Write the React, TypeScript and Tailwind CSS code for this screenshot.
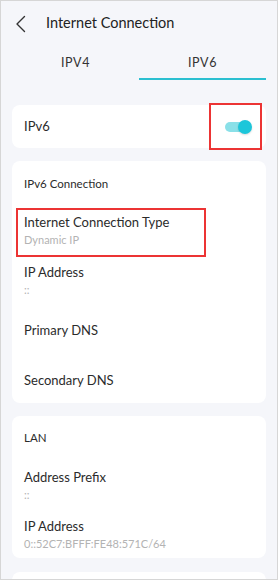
import React from "react";

const font = { fontFamily: 'Lato, "Open Sans", Arial, sans-serif' };

function Row({ label, value, className }: { label: string; value?: string; className?: string }) {
  return (
    <div className={className}>
      <div className="text-[13px] leading-[18px] text-[#2b2b2b]">{label}</div>
      {value !== undefined && (
        <div className="text-[11px] leading-[18px] text-[#b3b3b3]">{value}</div>
      )}
    </div>
  );
}

export default function App() {
  return (
    <div
      className="relative w-[278px] h-[580px] overflow-hidden bg-[#f5f6fa] border border-[#d6d6d6]"
      style={font}
    >
      {/* Header */}
      <div className="flex items-center h-[44px] pl-[14px]">
        <svg width="11" height="18" viewBox="0 0 11 18" className="mt-[1px]">
          <path d="M9.5 1.5 L2 9 L9.5 16.5" fill="none" stroke="#333" strokeWidth="1.4" strokeLinecap="round" strokeLinejoin="round" />
        </svg>
        <div className="ml-[20px] text-[14.5px] text-[#222] leading-[20px]">Internet Connection</div>
      </div>

      {/* Tabs */}
      <div className="mx-[11px] flex h-[36px]">
        <div className="flex-1 flex flex-col items-center">
          <div className="text-[12.5px] leading-[20px] text-[#333] mt-[8px] tracking-[0.6px]">IPV4</div>
        </div>
        <div className="flex-1 flex flex-col items-center">
          <div className="text-[12.5px] leading-[20px] text-[#333] mt-[8px] tracking-[0.6px]">IPV6</div>
          <div className="mt-auto mb-[1px] w-full h-[2px] bg-[#2bbfd0]" />
        </div>
      </div>

      {/* Card 1 */}
      <div className="mx-[11px] mt-[24px] h-[43px] bg-white rounded-[8px] flex items-center justify-between pl-[12px] pr-[14px]">
        <div className="text-[13px] text-[#2b2b2b]">IPv6</div>
        <div className="relative w-[27px] h-[14px]">
          <div className="absolute left-0 top-[2px] w-[20px] h-[10px] rounded-full bg-[#8ae0e8]" />
          <div className="absolute right-0 top-0 w-[14px] h-[14px] rounded-full bg-[#1cc6da] shadow-[0_1px_2px_rgba(0,0,0,0.15)]" />
        </div>
      </div>

      {/* Card 2 */}
      <div className="mx-[11px] mt-[13px] h-[242px] bg-white rounded-[8px] px-[12px] pt-[15px]">
        <div className="text-[11.5px] leading-[16px] text-[#2b2b2b]">IPv6 Connection</div>
        <Row className="mt-[21px] h-[50px]" label="Internet Connection Type" value="Dynamic IP" />
        <Row className="h-[58px]" label="IP Address" value="::" />
        <Row className="h-[50px]" label="Primary DNS" value="" />
        <Row label="Secondary DNS" value="" />
      </div>

      {/* Card 3 */}
      <div className="mx-[11px] mt-[13px] h-[142px] bg-white rounded-[8px] px-[12px] pt-[14px]">
        <div className="text-[11.5px] leading-[16px] text-[#2b2b2b]">LAN</div>
        <Row className="mt-[22px] h-[49px]" label="Address Prefix" value="::" />
        <Row label="IP Address" value="0::52C7:BFFF:FE48:571C/64" />
      </div>

      {/* Card 4 (cut off) */}
      <div className="mx-[11px] mt-[14px] h-[40px] bg-white rounded-[8px]" />

      {/* Annotation boxes */}
      <div className="absolute left-[208px] top-[102px] w-[53px] h-[47px] border-2 border-[#ec3434]" />
      <div className="absolute left-[15px] top-[207px] w-[190px] h-[49px] border-2 border-[#ec3434]" />
    </div>
  );
}
